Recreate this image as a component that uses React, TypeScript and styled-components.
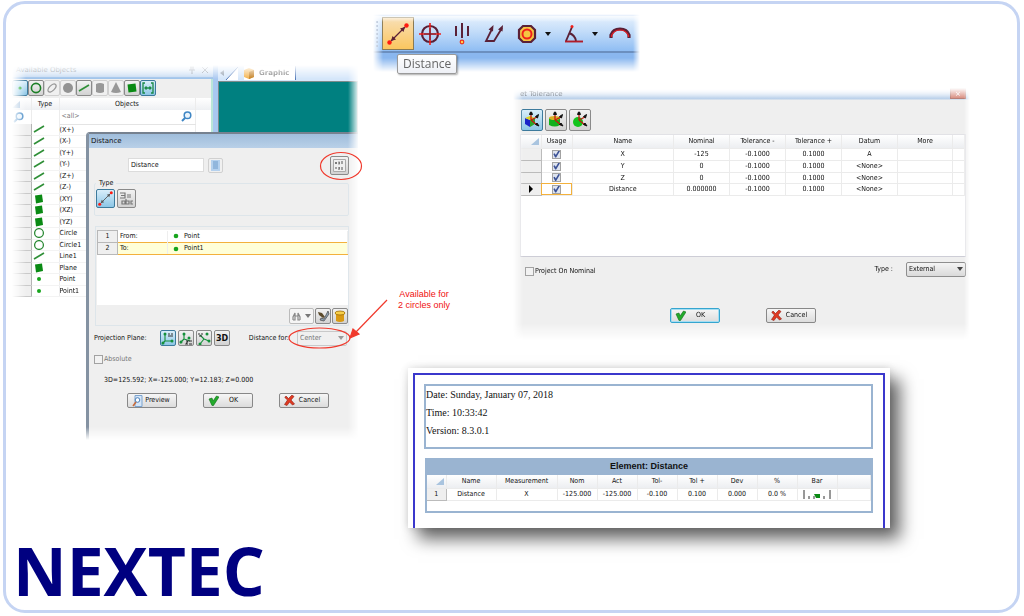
import React from "react";
import styled, { createGlobalStyle, css } from "styled-components";

const ui = `"DejaVu Sans Condensed", "Liberation Sans", Arial, sans-serif`;
const red = "#f0392c";
const green = "#0a8a14";
const steel = "#9ab4d1";

const GlobalStyle = createGlobalStyle`
  *, *::before, *::after { box-sizing: border-box; }
  body { margin: 0; background: #fff; font-family: ${ui}; font-size: 7px; line-height: 11px; color: #111; }
  button, input, select { font: inherit; color: inherit; margin: 0; padding: 0; }
  table { border-collapse: collapse; border-spacing: 0; font-size: 7px; }
  th, td { padding: 0; font-weight: 400; }
  svg { display: block; flex: none; }
  p, h1, h2 { margin: 0; font-weight: 400; font-size: inherit; }
`;

const Slide = styled.main`
  display: flex;
  min-height: calc(100vh - 4px);
  margin: 1px 4px 3px 3px;
  border: 3px solid #c5d4f3;
  border-radius: 22px;
`;

const LeftColumn = styled.div`
  flex: none;
  width: 352px;
  padding-top: 61px;
`;

const RightColumn = styled.div`
  flex: 1;
  min-width: 0;
  padding-top: 10px;
`;

/* Workspace capture */
const Workspace = styled.section`
  position: relative;
  height: 375px;
`;

const WorkspaceFade = styled.div`
  display: flex;
  align-items: flex-start;
  height: 100%;
  padding-left: 6px;
  mask-image: linear-gradient(to right, transparent 6px, #000 20px, #000 342px, transparent 353px),
    linear-gradient(to bottom, transparent, #000 14px, #000 362px, transparent);
  mask-composite: intersect;
`;

const ObjectsPanel = styled.div`
  width: 201px;
  background: #fff;
`;

const PanelTitle = styled.h2`
  display: flex;
  align-items: center;
  gap: 6px;
  height: 14px;
  padding: 0 4px 2px;
  font-family: "DejaVu Sans", sans-serif;
  font-size: 7px;
  color: #6d7683;
  background: linear-gradient(#eef5fd, #c5daf2);
  border-bottom: 2px solid #9fc3ea;
  & > span { flex: 1; }
`;

const ObjectTools = styled.div`
  display: flex;
  height: 19px;
  padding: 1px 0;
  background: #efefef;
  border-right: 2px solid #b9e6d8;
`;

const IconButton = styled.button<{ $size: number; $active?: boolean; $soft?: boolean }>`
  display: flex;
  align-items: center;
  justify-content: center;
  flex: none;
  width: ${(p) => p.$size}px;
  height: ${(p) => p.$size}px;
  border: 1px solid ${(p) => (p.$soft ? "#d0d0d0" : "#8a8a8a")};
  border-radius: 2px;
  background: ${(p) => (p.$soft ? "#f0f0f0" : "linear-gradient(#f2f2f2, #d2d2d2)")};
  ${(p) =>
    p.$active &&
    css`
      border-color: #3d7a9c;
      background: linear-gradient(#d9eefa, #8cc6e6);
    `}
`;

const ObjectTable = styled.table`
  width: 100%;
  table-layout: fixed;
  border-right: 2px solid #b9e6d8;
  thead tr:first-child { height: 12px; background: linear-gradient(#fff, #eef0f3); }
  thead tr:last-child { height: 14px; }
  tbody tr { height: 11px; }
  tbody tr:nth-child(even) { height: 12px; }
  tbody td, tbody th { line-height: 10px; border-bottom: 1px solid #f3f3f3; }
  td, th { border-right: 1px solid #ececec; text-align: left; }
  tbody th { background: #efefef; border-bottom-color: #c9c9c9; border-right-color: #b4b4b4; }
  td svg { margin-left: 1px; }
`;

const HeadCell = styled.th`
  && { text-align: center; }
`;

const FilterCell = styled.td`
  && { border-bottom: 1px solid #e4e4e4; color: #777; }
  & > div { display: flex; justify-content: space-between; align-items: center; padding: 0 3px 0 2px; }
`;

const GraphicPane = styled.div`
  display: flex;
  flex-direction: column;
  flex: 1;
  height: 100%;
  border-left: 5px solid #a9c8f0;
`;

const GraphicTabs = styled.div`
  display: flex;
  align-items: center;
  gap: 6px;
  height: 16px;
  font-family: "DejaVu Sans", sans-serif;
  font-size: 7px;
  font-weight: 700;
  color: #777;
  background: #d5e6fa;
`;

const GraphicTab = styled.span`
  display: flex;
  align-items: center;
  gap: 5px;
  height: 14px;
  padding: 0 6px 0 0;
  background: #fff;
  border-right: 1px solid #5279b8;
`;

const Viewport = styled.div`
  height: 60px;
  background: #008080;
  border: 1px solid #7c8b8b;
`;

/* Distance window, stacked over the workspace */
const DistanceWindow = styled.div`
  position: absolute;
  left: 80px;
  right: 0;
  top: 67px;
  bottom: 0;
  background: #efefef;
  border-left: 3px solid #8492a2;
  border-top: 2px solid #76818f;
  border-top-left-radius: 4px;
`;

const WindowTitle = styled.h2`
  && { font-family: "DejaVu Sans", sans-serif; }
  height: 14px;
  padding: 0 2px;
  line-height: 14px;
  color: #111;
  background: linear-gradient(#9fbddb, #b9d0e8);
`;

const NameRow = styled.div`
  display: flex;
  align-items: center;
  gap: 4px;
  height: 26px;
  margin-top: 4px;
  padding: 0 9px 0 39px;
  & > :last-child { margin-left: auto; }
`;

const NameInput = styled.input`
  width: 76px;
  height: 14px;
  padding: 0 2px;
  border: 1px solid #dcdcdc;
  background: #fff;
`;

const TypeGroup = styled.fieldset`
  display: flex;
  gap: 2px;
  height: 38px;
  margin: 0 9px 0 5px;
  padding: 0 1px;
  border: 1px solid #dde5ea;
  border-radius: 2px;
  legend { padding: 0 3px; }
`;

const PointsGroup = styled.div`
  height: 100px;
  margin: 10px 9px 0 6px;
  padding: 3px 0 0 1px;
  border: 1px solid #dde5ea;
`;

const PointsArea = styled.div`
  height: 75px;
  background: #fff;
`;

const PointsTable = styled.table`
  width: 100%;
  table-layout: fixed;
  tr { height: 12px; }
  th { border: 1px solid #b8b8b8; background: #efefef; }
  td { padding: 0 2px; border-right: 1px solid #eee; }
  td > span { display: flex; align-items: center; gap: 5px; padding-left: 3px; }
  tr:last-child td { background: #ffffd8; border-top: 1px solid #f3b13c; border-bottom: 1px solid #f3b13c; }
`;

const ToolsRow = styled.div`
  display: flex;
  justify-content: flex-end;
  gap: 1px;
  padding: 3px 0;
`;

const FindButton = styled.button`
  display: flex;
  align-items: center;
  justify-content: center;
  gap: 4px;
  width: 25px;
  height: 16px;
  border: 1px solid #bbb;
  border-radius: 2px;
  background: #f5f5f5;
`;

const ProjectionRow = styled.div`
  display: flex;
  align-items: center;
  gap: 2px;
  height: 24px;
  padding: 0 11px 0 5px;
  white-space: nowrap;
  & > span:first-child { width: 64px; }
  & > label { margin-left: auto; margin-right: 6px; }
`;

const SelectBox = styled.span<{ $width: number }>`
  display: grid;
  flex: none;
  align-items: center;
  width: ${(p) => p.$width}px;
  height: 15px;
  & > * { grid-area: 1 / 1; }
  & > svg { justify-self: end; margin-right: 3px; pointer-events: none; }
`;

const Select = styled.select`
  appearance: none;
  width: 100%;
  height: 100%;
  padding: 0 2px;
  border: 1px solid #8e8e8e;
  border-radius: 2px;
  background: linear-gradient(#f4f4f4, #dadada);
  &:disabled { opacity: 1; color: #777; border-color: #c9c9c9; background: #f0f0f0; }
`;

const CheckLabel = styled.label<{ $muted?: boolean }>`
  display: flex;
  align-items: center;
  gap: 1px;
  color: ${(p) => (p.$muted ? "#777" : "inherit")};
`;

const CheckBox = styled.input`
  appearance: none;
  display: inline-grid;
  place-items: center;
  width: 9px;
  height: 9px;
  border: 1px solid #a2a2a2;
  background: #f2f2f2;
  vertical-align: middle;
  &:checked { background: #dfe4ee; }
  &:checked::before {
    content: "";
    width: 7px;
    height: 7px;
    background: #3c5296;
    clip-path: polygon(5% 50%, 25% 40%, 40% 65%, 78% 0, 100% 8%, 45% 100%, 30% 100%);
  }
`;

const AbsoluteRow = styled.div`
  margin: 4px 5px 0;
`;

const ResultLine = styled.output`
  display: block;
  margin: 10px 0 0 15px;
`;

const ActionRow = styled.div<{ $gap: number }>`
  display: flex;
  justify-content: center;
  gap: ${(p) => p.$gap}px;
`;

const ActionButton = styled.button<{ $focus?: boolean }>`
  display: flex;
  align-items: center;
  width: 50px;
  height: 15px;
  padding: 0 4px;
  border: 1px solid ${(p) => (p.$focus ? "#35a5cf" : "#888")};
  border-radius: 2px;
  background: linear-gradient(#f6f6f6, #dcdcdc);
  box-shadow: ${(p) => (p.$focus ? "inset 0 0 0 1px #a5def3" : "none")};
  & > span { flex: 1; text-align: center; }
`;

const DistanceActions = styled.div`
  margin: 7px 28px 0 37px;
`;

const Markup = styled.svg`
  position: absolute;
  left: 0;
  top: 0;
  overflow: visible;
  pointer-events: none;
`;

const Logo = styled.h1`
  && {
    margin: 90px 0 0 7px;
    font-family: "Open Sans", "Noto Sans", sans-serif;
    font-size: 66px;
    line-height: 80px;
    font-weight: 700;
    color: #000080;
  }
`;

/* Measurement toolbar */
const ToolbarFigure = styled.section`
  position: relative;
  width: 267px;
  height: 64px;
  margin-left: 15px;
`;

const ToolbarFade = styled.div`
  height: 60px;
  padding-top: 2px;
  background: #8ab7ef;
  mask-image: linear-gradient(to right, transparent, #000 10px, #000 260px, transparent),
    linear-gradient(to bottom, transparent, #000 8px, #000 44px, transparent 58px);
  mask-composite: intersect;
`;

const Toolbar = styled.div`
  display: flex;
  align-items: center;
  height: 37px;
  padding-left: 3px;
  background: linear-gradient(#e4f0fd, #c2dcf9 45%, #8fbdf3);
  border-bottom: 2px solid #6b8fbf;
`;

const Grip = styled.span`
  width: 2px;
  height: 26px;
  margin-right: 4px;
  border-left: 2px dotted #7b95bb;
`;

const ToolButton = styled.button<{ $selected?: boolean; $wide?: boolean }>`
  display: flex;
  align-items: center;
  justify-content: center;
  gap: 8px;
  flex: none;
  width: ${(p) => (p.$wide ? 47 : 32)}px;
  height: 33px;
  border: 1px solid ${(p) => (p.$selected ? "#8b7a52" : "transparent")};
  background: ${(p) => (p.$selected ? "linear-gradient(#f8dfb5, #fbc65f)" : "none")};
`;

const Tooltip = styled.div`
  position: absolute;
  left: 24px;
  top: 40px;
  height: 20px;
  padding: 0 5px;
  border: 1px solid #9a9a9a;
  border-radius: 2px;
  background: linear-gradient(#fff, #eef0f6);
  box-shadow: 1px 1px 2px #0005;
  font-family: "Open Sans", sans-serif;
  font-size: 12px;
  line-height: 18px;
  color: #666;
`;

/* Middle band: callout and tolerance dialog */
const MiddleBand = styled.div`
  display: flex;
  align-items: flex-start;
  margin: 10px 47px 0 30px;
`;

const Callout = styled.p`
  && {
    flex: none;
    width: 72px;
    margin: 201px 53px 0 0;
    font-family: "Liberation Sans", Arial, sans-serif;
    font-size: 9px;
    line-height: 11px;
    text-align: center;
    color: #f01010;
  }
`;

const ToleranceDialog = styled.section`
  flex: 1;
  height: 252px;
  padding: 0 4px 0 7px;
  background: linear-gradient(#fff, #b9d0ea 11px, #efefef 12px);
  mask-image: linear-gradient(to right, transparent, #000 10px, #000 calc(100% - 6px), transparent),
    linear-gradient(to bottom, transparent, #000 10px, #000 236px, transparent);
  mask-composite: intersect;
`;

const ToleranceTitle = styled.div`
  display: flex;
  justify-content: space-between;
  height: 21px;
  font-family: "DejaVu Sans", sans-serif;
  font-size: 7px;
  line-height: 12px;
  color: #565f6b;
`;

const CloseButton = styled.button`
  width: 16px;
  height: 11px;
  border: 1px solid #b98078;
  background: #d99084;
  color: #fff;
  line-height: 8px;
`;

const AxisButtons = styled.div`
  display: flex;
  gap: 2px;
  height: 25px;
  padding-left: 1px;
`;

const ToleranceArea = styled.div`
  height: 123px;
  background: #fff;
  border: 1px solid #e2e2e6;
  border-bottom-color: #cdcdd6;
`;

const DataTable = styled.table`
  width: 100%;
  table-layout: fixed;
  text-align: center;
  thead tr { height: 13px; background: linear-gradient(#fff, #eceef1); }
  tbody tr { height: 12px; }
  tbody tr:nth-child(3n) { height: 11px; }
  th, td { line-height: 10px; border-right: 1px solid #ebebeb; border-bottom: 1px solid #ebebeb; }
  tbody th { background: #efefef; border-right-color: #bbb; border-bottom-color: #bbb; }
  thead th:first-child svg { margin-left: auto; margin-right: 2px; }
  tbody svg { margin: 0 auto; }
`;

const UsageCell = styled.td<{ $current: boolean }>`
  &:nth-child(n) { outline: ${(p) => (p.$current ? "1px solid #f3b13c" : "none")}; outline-offset: -1px; }
  input { display: grid; margin: 0 auto; }
`;

const OptionsRow = styled.div`
  display: flex;
  justify-content: space-between;
  padding: 4px 0 0 5px;
  margin-bottom: 31px;
`;

const OptionCheck = styled.div`
  padding-top: 5px;
`;

const TypeField = styled.div`
  display: flex;
  align-items: center;
  gap: 13px;
`;

/* Report card */
const Report = styled.section`
  max-width: 482px;
  height: 160px;
  margin: 28px 0 0 50px;
  padding: 5px 5px 0;
  background: #fff;
  box-shadow: 10px 11px 16px 0 #0009, 0 0 8px #0002;
`;

const ReportPage = styled.div`
  height: 155px;
  padding: 9px 10px 0 9px;
  border: 2px solid #3b38cc;
  border-bottom: 0;
`;

const ReportHead = styled.div`
  height: 65px;
  border: 2px solid ${steel};
  font-family: "Liberation Serif", "Times New Roman", serif;
  font-size: 10px;
  line-height: 18px;
`;

const ReportBlock = styled.div`
  height: 55px;
  margin: 9px 0 0 1px;
  border: 2px solid ${steel};
  border-top: 0;
`;

const ReportCaption = styled.h2`
  && {
    font-family: "Liberation Sans", Arial, sans-serif;
    font-weight: 700;
    font-size: 9px;
    line-height: 17px;
    text-align: center;
    background: ${steel};
  }
`;

const Caret = ({ color = "#444" }: { color?: string }) => (
  <svg width="6" height="4" viewBox="0 0 6 4"><path d="M0 0h6L3 4z" fill={color} /></svg>
);

const Corner = () => (
  <svg width="8" height="7" viewBox="0 0 8 7"><path d="M8 0v7H0z" fill="#a9c4df" /></svg>
);

const Lens = () => (
  <svg width="11" height="11" viewBox="0 0 11 11" fill="none" stroke="#3f86c4" strokeWidth="1.5">
    <circle cx="6.5" cy="4.3" r="3.3" fill="#eaf4fc" /><path d="M4 7L1 10" strokeWidth="2" />
  </svg>
);

type Shape = "line" | "plane" | "circle" | "point";

const ShapeIcon = ({ shape }: { shape: Shape }) => (
  <svg width="12" height="10" viewBox="0 0 12 10">
    {shape === "line" && <path d="M1 8L11 2" stroke="#2f8f37" strokeWidth="1.6" />}
    {shape === "plane" && <path d="M2 1.500L9 .5l1 7.500-7 1.500z" fill={green} />}
    {shape === "circle" && <circle cx="6" cy="5" r="4.400" fill="none" stroke="#2b8a35" strokeWidth="1.3" />}
    {shape === "point" && <circle cx="6" cy="5" r="2" fill="#17a51d" />}
  </svg>
);

const toolShapes = [
  { name: "Point", active: true, soft: false, art: <circle cx="6" cy="6" r="1.6" fill="#17a51d" /> },
  { name: "Circle", art: <circle cx="6" cy="6" r="4.6" fill="none" stroke="#1d7f27" strokeWidth="1.6" /> },
  { name: "Ellipse", soft: true, art: <ellipse cx="6" cy="6" rx="5" ry="2.6" transform="rotate(-45 6 6)" fill="none" stroke="#999" strokeWidth="1.3" /> },
  { name: "Sphere", soft: true, art: <circle cx="6" cy="6" r="5" fill="#939393" /> },
  { name: "Line", art: <path d="M1 9L11 3" stroke="#2f8f37" strokeWidth="1.6" /> },
  { name: "Cylinder", soft: true, art: <path d="M2 2q4-2 8 0v8q-4 2-8 0z" fill="#989898" /> },
  { name: "Cone", soft: true, art: <path d="M6 0L11 10q-5 2-10 0z" fill="#989898" /> },
  { name: "Plane", art: <path d="M1.500 2.500L9.500 1.500l1 8-8 1z" fill={green} /> },
  { name: "Distance", active: true, art: <path d="M3 1H1v10h2M9 1h2v10H9M3 6h6M4.500 4.500L3 6l1.500 1.500M7.500 4.500L9 6 7.500 7.500" fill="none" stroke="#1a8a45" strokeWidth="1.3" /> },
];

const objects: [Shape, string][] = [
  ["line", "(X+)"], ["line", "(X-)"], ["line", "(Y+)"], ["line", "(Y-)"], ["line", "(Z+)"], ["line", "(Z-)"],
  ["plane", "(XY)"], ["plane", "(XZ)"], ["plane", "(YZ)"],
  ["circle", "Circle"], ["circle", "Circle1"], ["line", "Line1"], ["plane", "Plane"], ["point", "Point"], ["point", "Point1"],
];

const OkIcon = () => (
  <svg width="11" height="11" viewBox="0 0 11 11"><path d="M1 4l3-1 1 3 3.500-5L11 2 5.500 10.500H4z" fill="#22ab2b" stroke="#0f6d18" strokeWidth=".6" /></svg>
);

const CancelIcon = () => (
  <svg width="11" height="11" viewBox="0 0 11 11"><path d="M2 1l2.500 2.500L8 0l2 1.500L7 5l3.500 4-2 1L5.500 7 3 10.500.500 9.500 3.500 5 0.800 2.500z" fill="#e03a22" stroke="#8f1d10" strokeWidth=".6" /></svg>
);

const PreviewIcon = () => (
  <svg width="11" height="12" viewBox="0 0 11 12">
    <path d="M3 .5h7v11H3z" fill="#d5e6f8" stroke="#7da4cf" /><circle cx="5.500" cy="5" r="2.300" fill="#fff" stroke="#4a7fb8" /><path d="M4 7L1 11" stroke="#c96a3a" strokeWidth="1.600" />
  </svg>
);

const DistanceGlyph = ({ size, color = "#5a2036" }: { size: number; color?: string }) => (
  <svg width={size} height={size} viewBox="0 0 22 22">
    <path d="M4 18L18 4" stroke={color} strokeWidth="1.3" />
    <path d="M4 18l1.500-5 3.500 3.500zM18 4l-1.500 5L13 5.500z" fill={color} />
    <circle cx="2.500" cy="19.500" r="2.200" fill="#ff1a10" /><circle cx="19.500" cy="2.500" r="2.200" fill="#ff1a10" />
  </svg>
);

const AxisGlyph = ({ variant }: { variant: number }) => (
  <svg width="14" height="13" viewBox="0 0 14 13" fill="none" stroke="#14903a" strokeWidth="1.1">
    {variant === 0 && <path d="M4 9V2M4 9h7M4 9l-3 3" />}
    {variant === 1 && <path d="M5 7V1M5 7L1 11M5 7l6 2" />}
    {variant === 2 && <path d="M7 7L3 3M7 7l5 2M7 7l-4 5" />}
    <g fill="#14903a" stroke="none">
      {variant === 0 && <><circle cx="4" cy="2" r="1.500" /><circle cx="11" cy="9" r="1.500" /><circle cx="2" cy="11" r="1.500" /></>}
      {variant === 1 && <><circle cx="5" cy="2" r="1.500" /><circle cx="2" cy="10" r="1.500" /><circle cx="10" cy="6" r="1.500" /></>}
      {variant === 2 && <><circle cx="10" cy="2" r="1.500" /><circle cx="12" cy="9" r="1.500" /><circle cx="3" cy="12" r="1.500" /></>}
    </g>
    <path d={variant === 0 ? "M7 2h2M10 2h2M7 4h5" : variant === 1 ? "M7 9h2l-2 3h2M10 9h3M10 12h3" : "M1 2h2M4 2h2M2 4h3"} stroke="#333" />
  </svg>
);

const SolidGlyph = ({ solid }: { solid: "box" | "cylinder" | "sphere" }) => (
  <svg width="18" height="18" viewBox="0 0 18 18">
    {solid === "box" && <><path d="M2 7l5 2v7l-5-3z" fill="#1a23c8" /><path d="M7 9l5-2v6l-5 3z" fill="#2aa52c" /><path d="M2 7l5-2 5 2-5 2z" fill="#e0d020" /></>}
    {solid === "cylinder" && <><path d="M2 7h11v7q-5 3-11 0z" fill="#12b01c" /><ellipse cx="7.500" cy="7" rx="5.500" ry="2" fill="#d8b022" /></>}
    {solid === "sphere" && <circle cx="7" cy="11" r="5" fill="#12c41c" />}
    <path d="M8 9V3M8 9l6-3M8 9l6 5" stroke="#c01c10" strokeWidth="1.300" />
    <path d="M6.500 3.500L7.500 1h1l1 2.500zM12.500 5.500l3-2-1 3.500zM12.500 13.500l1.500-1.500 2 3z" fill="#111" stroke="#111" />
  </svg>
);

const toolbarIcons = [
  { name: "Distance", selected: true, art: <DistanceGlyph size={22} /> },
  { name: "Position", art: <svg width="22" height="22" viewBox="0 0 22 22" fill="none" strokeWidth="2.200"><circle cx="11" cy="11" r="8" stroke="#5a2036" /><path d="M11 0v22M0 11h22" stroke="#f0201c" strokeWidth="1.600" /><path d="M11 5v12M5 11h12" stroke="#5a2036" strokeWidth="1" /></svg> },
  { name: "Symmetry", art: <svg width="22" height="22" viewBox="0 0 22 22" fill="none" stroke="#5a2036" strokeWidth="2"><path d="M5 3v10M11 0v15M17 3v10" /><circle cx="11" cy="19" r="1.800" stroke="#f0301c" fill="#ffd24a" strokeWidth="1.200" /></svg> },
  { name: "Parallelism", art: <svg width="20" height="22" viewBox="0 0 20 22" fill="none" stroke="#5a2036" strokeWidth="1.800"><path d="M8 6L2 18h8L18 5" /><path d="M4.500 6.500L9.500 2l-.5 6.500zM14 6.500L19 2l-.5 6.500z" fill="#5a2036" stroke="none" /></svg> },
  { name: "Concentricity", wide: true, art: <svg width="20" height="20" viewBox="0 0 20 20" fill="none"><path d="M6 2h8l4 4v8l-4 4H6l-4-4V6z" fill="#f5c542" stroke="#5a2036" strokeWidth="2.200" /><circle cx="10" cy="10" r="4.500" stroke="#f0201c" strokeWidth="2" /></svg> },
  { name: "Angle", wide: true, art: <svg width="20" height="20" viewBox="0 0 20 20" fill="none" stroke="#5a2036" strokeWidth="1.900"><path d="M8 3L2 17" /><path d="M5 9q6 2 7 8" /><path d="M1 17.500h18" stroke="#b01c2a" /><circle cx="8" cy="2.500" r="1.500" fill="#f0201c" stroke="none" /></svg> },
  { name: "Form", art: <svg width="22" height="20" viewBox="0 0 22 20" fill="none"><path d="M2 14V11Q4 5 11 5t9 6v3" stroke="#5a2036" strokeWidth="3.200" /><path d="M2.500 13V11.500Q5 6 11 6t8.500 5.500V13" stroke="#e81c22" strokeWidth="1.200" /></svg> },
];

const toleranceRows = [
  ["X", "-125", "A"], ["Y", "0", "<None>"], ["Z", "0", "<None>"], ["Distance", "0.000000", "<None>"],
];

function AvailableObjects() {
  return (
    <ObjectsPanel>
      <PanelTitle><span>Available Objects</span>
        <svg width="20" height="8" viewBox="0 0 20 8" fill="none" stroke="#8a93a0"><path d="M1 1h4M2 1v3M4 1v3M0 4h6M3 4v4M13 1l6 6M19 1l-6 6" /></svg>
      </PanelTitle>
      <ObjectTools>
        {toolShapes.map((t) => (
          <IconButton key={t.name} $size={16} $active={t.active} $soft={t.soft} aria-label={t.name}>
            <svg width="12" height="12" viewBox="0 0 12 12">{t.art}</svg>
          </IconButton>
        ))}
      </ObjectTools>
      <ObjectTable>
        <colgroup><col width="19" /><col width="28" /><col /><col width="17" /></colgroup>
        <thead>
          <tr><th><Corner /></th><HeadCell>Type</HeadCell><HeadCell>Objects</HeadCell><th /></tr>
          <tr><td><Lens /></td><td /><FilterCell><div><span>&lt;all&gt;</span><span><Lens /></span></div></FilterCell><td /></tr>
        </thead>
        <tbody>
          {objects.map(([shape, name]) => (
            <tr key={name}><th /><td><ShapeIcon shape={shape} /></td><td>{name}</td><td /></tr>
          ))}
        </tbody>
      </ObjectTable>
    </ObjectsPanel>
  );
}

function DistanceDialog() {
  return (
    <DistanceWindow>
      <WindowTitle>Distance</WindowTitle>
      <NameRow>
        <NameInput defaultValue="Distance" aria-label="Name" />
        <IconButton $size={15} $soft aria-label="List">
          <svg width="9" height="11" viewBox="0 0 9 11"><path d="M0 0h9v11H0z" fill="#b5d1ee" /><path d="M2 2h5M2 4h5M2 6h5M2 8h5" stroke="#6f9ccb" /></svg>
        </IconButton>
        <IconButton $size={19} aria-label="Tolerance">
          <svg width="13" height="13" viewBox="0 0 13 13" fill="none" stroke="#555"><path d="M.5.5h12v12H.5z" fill="#f0f0f0" stroke="#aaa" /><path d="M2 4h2M3 3v2M6 4h1M9 2v3M2 9h2M6 9h1M9 8v3M6 2.500v3M6 8v3" /></svg>
        </IconButton>
      </NameRow>
      <TypeGroup>
        <legend>Type</legend>
        <IconButton $size={19} $active aria-label="Two point distance"><DistanceGlyph size={15} color="#555" /></IconButton>
        <IconButton $size={19} aria-label="Named distance">
          <svg width="15" height="15" viewBox="0 0 15 15" fill="none" stroke="#777" strokeWidth="1.200"><path d="M1 2h5v5H1M2 4.500h4M8 4h4M8 6h4M3 10h3v3H3zM7 8v5h3v-3H7M14 10h-2v3h2" /></svg>
        </IconButton>
      </TypeGroup>
      <PointsGroup>
        <PointsArea>
          <PointsTable>
            <colgroup><col width="20" /><col width="50" /><col /></colgroup>
            <tbody>
              <tr><th>1</th><td>From:</td><td><span><svg width="6" height="6"><circle cx="3" cy="3" r="2.300" fill="#17a51d" /></svg>Point</span></td></tr>
              <tr><th>2</th><td>To:</td><td><span><svg width="6" height="6"><circle cx="3" cy="3" r="2.300" fill="#17a51d" /></svg>Point1</span></td></tr>
            </tbody>
          </PointsTable>
        </PointsArea>
        <ToolsRow>
          <FindButton aria-label="Find">
            <svg width="9" height="9" viewBox="0 0 9 9" fill="none" stroke="#888" strokeWidth="1.200"><path d="M1 8V5l2-4v7H1M8 8V5L6 1v7h2M3 4h3" /></svg>
            <Caret color="#777" />
          </FindButton>
          <IconButton $size={16} aria-label="Settings">
            <svg width="13" height="13" viewBox="0 0 13 13"><path d="M1 2l4 1 3 4-2 1-4-3z" fill="#5b4a2c" /><path d="M11 1l1 3-5 7-4-1 1-2 3 1z" fill="#8ea2b5" stroke="#444" strokeWidth=".7" /></svg>
          </IconButton>
          <IconButton $size={16} aria-label="Delete">
            <svg width="12" height="13" viewBox="0 0 12 13"><path d="M1 2h10l-1 3v6q-4 2-8 0V5z" fill="#d99a14" /><ellipse cx="6" cy="3" rx="5" ry="2" fill="#f7cf4a" stroke="#9c6c08" strokeWidth=".8" /></svg>
          </IconButton>
        </ToolsRow>
      </PointsGroup>
      <ProjectionRow>
        <span>Projection Plane:</span>
        {[0, 1, 2].map((v) => (
          <IconButton key={v} $size={16} $active={v === 0} aria-label={["XY", "XZ", "YZ"][v]}><AxisGlyph variant={v} /></IconButton>
        ))}
        <ThreeD $size={16}>3D</ThreeD>
        <label htmlFor="distance-for">Distance for:</label>
        <SelectBox $width={50}>
          <Select id="distance-for" disabled><option>Center</option></Select>
          <Caret color="#999" />
        </SelectBox>
      </ProjectionRow>
      <AbsoluteRow><CheckLabel $muted><CheckBox type="checkbox" disabled />Absolute</CheckLabel></AbsoluteRow>
      <ResultLine>3D=125.592; X=-125.000; Y=12.183; Z=0.000</ResultLine>
      <DistanceActions>
        <ActionRow $gap={26}>
          <ActionButton><PreviewIcon /><span>Preview</span></ActionButton>
          <ActionButton><OkIcon /><span>OK</span></ActionButton>
          <ActionButton><CancelIcon /><span>Cancel</span></ActionButton>
        </ActionRow>
      </DistanceActions>
    </DistanceWindow>
  );
}

const ThreeD = styled(IconButton)`
  font-family: "DejaVu Sans", sans-serif;
  font-size: 8px;
  font-weight: 700;
`;

function Tolerance() {
  return (
    <ToleranceDialog>
      <ToleranceTitle><span>et Tolerance</span><CloseButton aria-label="Close">×</CloseButton></ToleranceTitle>
      <AxisButtons>
        {(["box", "cylinder", "sphere"] as const).map((s, i) => (
          <IconButton key={s} $size={22} $active={i === 0} aria-label={s}><SolidGlyph solid={s} /></IconButton>
        ))}
      </AxisButtons>
      <ToleranceArea>
        <DataTable>
          <colgroup><col width="20" /><col width="31" /><col /><col width="56" /><col width="56" /><col width="56" /><col width="56" /><col width="55" /><col width="12" /></colgroup>
          <thead>
            <tr><th><Corner /></th><th>Usage</th><th>Name</th><th>Nominal</th><th>Tolerance -</th><th>Tolerance +</th><th>Datum</th><th>More</th><th /></tr>
          </thead>
          <tbody>
            {toleranceRows.map(([name, nominal, datum], i) => (
              <tr key={name}>
                <th>{i === 3 && <svg width="4" height="8" viewBox="0 0 4 8"><path d="M0 0l4 4-4 4z" /></svg>}</th>
                <UsageCell $current={i === 3}><CheckBox type="checkbox" defaultChecked aria-label={`Use ${name}`} /></UsageCell>
                <td>{name}</td><td>{nominal}</td><td>-0.1000</td><td>0.1000</td><td>{datum}</td><td /><td />
              </tr>
            ))}
          </tbody>
        </DataTable>
      </ToleranceArea>
      <OptionsRow>
        <OptionCheck><CheckLabel><CheckBox type="checkbox" />Project On Nominal</CheckLabel></OptionCheck>
        <TypeField>
          <label htmlFor="tolerance-type">Type :</label>
          <SelectBox $width={60}>
            <Select id="tolerance-type"><option>External</option></Select>
            <Caret />
          </SelectBox>
        </TypeField>
      </OptionsRow>
      <ActionRow $gap={46}>
        <ActionButton $focus><OkIcon /><span>OK</span></ActionButton>
        <ActionButton><CancelIcon /><span>Cancel</span></ActionButton>
      </ActionRow>
    </ToleranceDialog>
  );
}

function ReportCard() {
  return (
    <Report>
      <ReportPage>
        <ReportHead>
          <p>Date: Sunday, January 07, 2018</p>
          <p>Time: 10:33:42</p>
          <p>Version: 8.3.0.1</p>
        </ReportHead>
        <ReportBlock>
          <ReportCaption>Element: Distance</ReportCaption>
          <DataTable>
            <colgroup><col width="19" /><col width="50" /><col width="61" /><col width="40" /><col width="40" /><col width="40" /><col width="40" /><col width="40" /><col width="40" /><col width="40" /><col /></colgroup>
            <thead>
              <tr><th><Corner /></th><th>Name</th><th>Measurement</th><th>Nom</th><th>Act</th><th>Tol-</th><th>Tol +</th><th>Dev</th><th>%</th><th>Bar</th><th /></tr>
            </thead>
            <tbody>
              <tr>
                <th>1</th><td>Distance</td><td>X</td><td>-125.000</td><td>-125.000</td><td>-0.100</td><td>0.100</td><td>0.000</td><td>0.0 %</td>
                <td><svg width="28" height="9" viewBox="0 0 28 9"><path d="M1 0v9M27 0v9M6 6v3M21 6v3M11 6v3" stroke="#333" /><path d="M11 4h6v4h-4z" fill={green} /></svg></td>
                <td />
              </tr>
            </tbody>
          </DataTable>
        </ReportBlock>
      </ReportPage>
    </Report>
  );
}

export default function App() {
  return (
    <>
      <GlobalStyle />
      <Slide>
        <LeftColumn>
          <Workspace>
            <WorkspaceFade>
              <AvailableObjects />
              <GraphicPane>
                <GraphicTabs>
                  <svg width="20" height="14" viewBox="0 0 20 14"><path d="M6 4v6L2 7z" fill="#8a97a8" /><path d="M8 14L20 1v13z" fill="#fff" /><path d="M8 14L20 1" stroke="#5279b8" fill="none" /></svg>
                  <GraphicTab>
                    <svg width="10" height="11" viewBox="0 0 10 11"><path d="M0 2l5-2 5 2v7l-5 2-5-2z" fill="#f3b24c" /><path d="M5 4l5-2v7l-5 2z" fill="#c47f20" /></svg>
                    Graphic
                  </GraphicTab>
                </GraphicTabs>
                <Viewport />
              </GraphicPane>
              <DistanceDialog />
            </WorkspaceFade>
            <Markup width="352" height="375" viewBox="0 0 352 375" fill="none" stroke={red} strokeWidth="1.2" aria-hidden="true">
              <ellipse cx="335" cy="101" rx="20.500" ry="13.500" />
              <ellipse cx="313.500" cy="273" rx="30.500" ry="10" />
              <path d="M381 235L350 267" />
              <path d="M344 273l3-9 6 5z" fill={red} />
            </Markup>
          </Workspace>
          <Logo>NEXTEC</Logo>
        </LeftColumn>
        <RightColumn>
          <ToolbarFigure>
            <ToolbarFade>
              <Toolbar>
                <Grip />
                {toolbarIcons.map((t) => (
                  <ToolButton key={t.name} $selected={t.selected} $wide={t.wide} aria-label={t.name}>
                    {t.art}{t.wide && <Caret color="#111" />}
                  </ToolButton>
                ))}
              </Toolbar>
            </ToolbarFade>
            <Tooltip role="tooltip">Distance</Tooltip>
          </ToolbarFigure>
          <MiddleBand>
            <Callout>Available for<br />2 circles only</Callout>
            <Tolerance />
          </MiddleBand>
          <ReportCard />
        </RightColumn>
      </Slide>
    </>
  );
}
